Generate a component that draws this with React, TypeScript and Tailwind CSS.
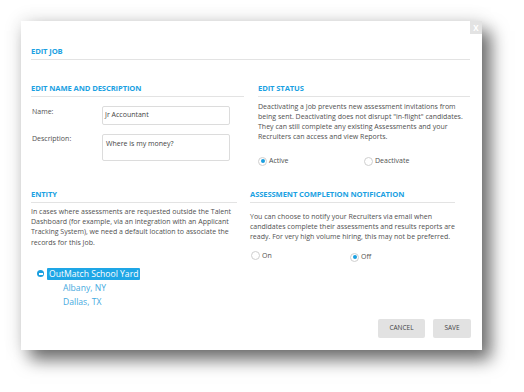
import React from "react";

function Radio({ label, checked }: { label: string; checked?: boolean }) {
  return (
    <span className="inline-flex items-center gap-[2px] leading-[10px]">
      <span className="flex h-[9px] w-[9px] items-center justify-center rounded-full border border-[#cfcfcf] bg-white">
        {checked && <span className="h-[4px] w-[4px] rounded-full bg-[#1a9fe0]" />}
      </span>
      <span>{label}</span>
    </span>
  );
}

function SectionTitle({ children }: { children: React.ReactNode }) {
  return (
    <div className="border-b border-[#e3e3e3] pb-[3px] text-[7.6px] font-bold leading-[10px] tracking-[-0.1px] text-[#1ba1e2]">
      {children}
    </div>
  );
}

export default function App() {
  return (
    <div
      className="h-[392px] w-[524px] overflow-hidden bg-white pl-[21px] pt-[21px] text-[#505050]"
      style={{ fontFamily: '"Open Sans", "Noto Sans", sans-serif' }}
    >
      <div className="relative flex h-[329px] w-[461px] flex-col bg-white pl-[10px] pr-[12px] shadow-[9px_10px_16px_rgba(0,0,0,0.55),0_0_18px_rgba(0,0,0,0.12)]">
        <button className="absolute right-0 top-0 flex h-[13px] w-[12px] items-center justify-center bg-[#e3e3e3] text-[8px] font-bold leading-none text-white">
          X
        </button>

        <div className="mt-[25px]">
          <SectionTitle>EDIT JOB</SectionTitle>
        </div>

        {/* top row */}
        <div className="flex h-[106px] items-start">
          <div className="w-[213px] pt-[23px]">
            <SectionTitle>EDIT NAME AND DESCRIPTION</SectionTitle>
            <div className="mt-[9px] flex text-[7px]">
              <div className="w-[71px] pl-[1px] pt-[1px] leading-[10px]">Name:</div>
              <div className="flex h-[19px] w-[128px] items-center rounded-[2px] border border-[#dcdcdc] px-[2px] text-[#444]">
                Jr Accountant
              </div>
            </div>
            <div className="mt-[9px] flex text-[7px]">
              <div className="w-[71px] pl-[1px] leading-[10px]">Description:</div>
              <div className="h-[27px] w-[128px] rounded-[2px] border border-[#dcdcdc] px-[3px] pt-[4px] leading-[10px] text-[#444]">
                Where is my money?
              </div>
            </div>
          </div>
          <div className="ml-[14px] w-[212px] pt-[23px]">
            <SectionTitle>EDIT STATUS</SectionTitle>
            <p className="mt-[5px] text-[7px] leading-[10px]">
              Deactivating a Job prevents new assessment invitations from being sent.
              Deactivating does not disrupt "in-flight" candidates. They can still complete any
              existing Assessments and your Recruiters can access and view Reports.
            </p>
            <div className="mt-[14px] flex text-[7px]">
              <div className="w-[106px]">
                <Radio label="Active" checked />
              </div>
              <Radio label="Deactivate" />
            </div>
          </div>
        </div>

        {/* bottom row */}
        <div className="flex items-start">
          <div className="w-[206px] pt-[23px]">
            <SectionTitle>ENTITY</SectionTitle>
            <p className="mt-[4px] text-[7px] leading-[10.2px]">
              In cases where assessments are requested outside the Talent Dashboard (for
              example, via an integration with an Applicant Tracking System), we need a default
              location to associate the records for this Job.
            </p>
            <div className="ml-[6px] mt-[20px] flex items-center gap-[3px]">
              <span className="flex h-[7px] w-[7px] items-center justify-center rounded-full bg-[#1a9fe0]">
                <span className="h-[1.5px] w-[4px] bg-white" />
              </span>
              <span className="rounded-[1px] bg-[#1ea6e6] px-[2px] text-[8.6px] leading-[12px] text-white">
                OutMatch School Yard
              </span>
            </div>
            <div className="pl-[32px] text-[8.6px] leading-[14.5px] text-[#45a9e0]">
              <div className="mt-[1px]">Albany, NY</div>
              <div>Dallas, TX</div>
            </div>
          </div>
          <div className="ml-[13px] w-[205px] pt-[23px]">
            <SectionTitle>ASSESSMENT COMPLETION NOTIFICATION</SectionTitle>
            <p className="mt-[9px] text-[7px] leading-[10.2px]">
              You can choose to notify your Recruiters via email when candidates complete their
              assessments and results reports are ready. For very high volume hiring, this may not
              be preferred.
            </p>
            <div className="mt-[8px] flex text-[7px]">
              <div className="w-[100px] pl-[1px]">
                <Radio label="On" />
              </div>
              <Radio label="Off" checked />
            </div>
          </div>
        </div>

        <div className="mt-auto flex justify-end gap-[8px] pb-[12px]">
          <button className="h-[19px] w-[47px] rounded-[2px] bg-[#e2e2e2] text-[6.5px] leading-none text-[#444]">
            CANCEL
          </button>
          <button className="-mr-[1px] h-[19px] w-[38px] rounded-[2px] bg-[#e2e2e2] text-[6.5px] leading-none text-[#444]">
            SAVE
          </button>
        </div>
      </div>
    </div>
  );
}
